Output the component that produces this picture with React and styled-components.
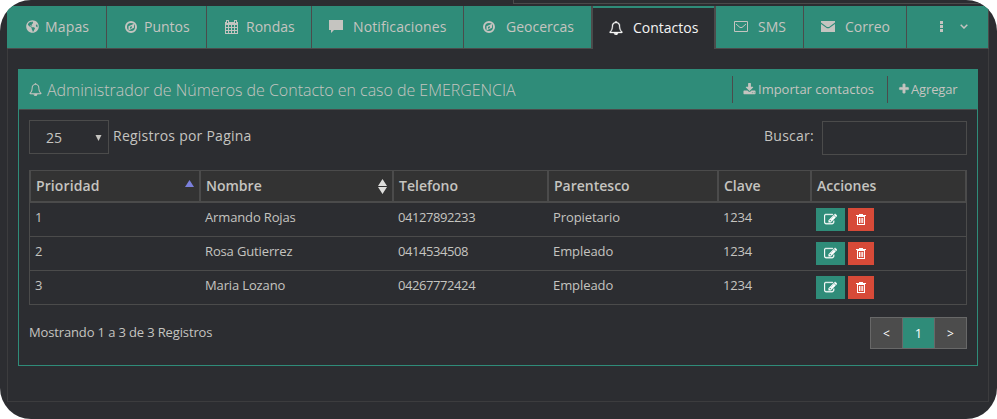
import React from 'react';
import styled, { createGlobalStyle } from 'styled-components';
import { FaGlobeAmericas } from 'react-icons/fa';

const teal = '#2f8c79';
const dark = '#2c2d31';
const line = '#4b4b4b';
const soft = '#c5c4c0';

const Global = createGlobalStyle`
  * { box-sizing: border-box; }
  body { margin: 0; background: #fff; font-family: "Open Sans", "Noto Sans", sans-serif; color: ${soft}; }
  button { font-family: inherit; }
`;

const Window = styled.div`
  width: 997px;
  height: 419px;
  border-radius: 31px;
  background: ${dark};
  overflow: hidden;
  display: flex;
  flex-direction: column;
`;

const TopStrip = styled.div`
  height: 6px;
  padding-left: 513px;
  flex: none;
`;

const TopField = styled.div`
  height: 4px;
  border-left: 1px solid ${line};
  border-bottom: 1px solid ${line};
`;

const Tabs = styled.nav`
  display: flex;
  width: 982px;
  height: 43px;
  margin-left: 7px;
  flex: none;
`;

const Tab = styled.button`
  display: flex;
  align-items: center;
  width: ${p => p.$w}px;
  height: 43px;
  flex: none;
  border: 0;
  border-right: 1px solid ${line};
  border-bottom: 1px solid ${line};
  background: ${teal};
  color: ${soft};
  padding: 0 0 1px ${p => p.$pad}px;
  font-size: 14px;
  line-height: 20px;
  text-align: left;
`;

const ActiveTab = styled(Tab)`
  border: 1px solid ${line};
  border-width: 0 2px 0 1px;
  background: linear-gradient(${teal} 2px, ${dark} 2px);
  color: #f4f4f4;
  padding-bottom: 0;
`;

const Text = styled.span`
  white-space: nowrap;
  letter-spacing: ${p => p.$ls || 0}px;
`;

const Glyph = styled.svg`
  display: block;
  flex: none;
  fill: currentColor;
  margin-right: ${p => p.$gap || 0}px;
`;

const GlobeBox = styled.span`
  display: flex;
  font-size: 13px;
  margin-right: 6px;
`;

const Content = styled.main`
  width: 982px;
  height: 353px;
  margin-left: 7px;
  padding: 20px 10px 0;
  border: 1px solid #3c3c3e;
  border-top: 0;
`;

const Panel = styled.section`
  width: 960px;
  height: 297px;
  border: 1px solid ${teal};
`;

const PanelHead = styled.header`
  display: flex;
  align-items: center;
  height: 40px;
  padding: 0 20px 0 10px;
  background: ${teal};
  border-bottom: 1px solid ${line};
`;

const Title = styled.h1`
  display: flex;
  align-items: center;
  margin: 0;
  flex: 1;
  font-size: 16px;
  line-height: 24px;
  font-weight: 300;
`;

const HeadAction = styled.button`
  display: flex;
  align-items: center;
  height: 27px;
  width: ${p => p.$w}px;
  padding: 0 0 1px 10px;
  border: 0;
  border-left: 1px solid ${line};
  background: none;
  color: ${soft};
  font-size: 13px;
  line-height: 20px;
`;

const Body = styled.div`
  padding: 10px 10px 0;
`;

const Filters = styled.div`
  display: flex;
  align-items: flex-start;
  height: 50px;
  font-size: 14px;
  line-height: 32px;
`;

const PageSize = styled.button`
  display: flex;
  align-items: center;
  justify-content: space-between;
  width: 80px;
  height: 34px;
  margin-right: 4px;
  padding: 1px 6px 0 16px;
  border: 1px solid ${line};
  background: none;
  color: ${soft};
  font-size: 14px;
`;

const Search = styled.label`
  display: flex;
  margin-left: auto;
`;

const SearchInput = styled.input`
  width: 145px;
  height: 34px;
  margin: 1px 0 0 8px;
  border: 1px solid ${line};
  background: none;
  color: ${soft};
`;

const Table = styled.div`
  width: 938px;
  border: 1px solid ${line};
  border-bottom: 0;
`;

const Row = styled.div`
  display: grid;
  grid-template-columns: 170px 193px 155px 170px 93px 155px;
  height: 34px;
  border-bottom: 1px solid ${line};
  font-size: 13px;
  line-height: 18px;
`;

const HeadRow = styled(Row)`
  height: 32px;
  border-bottom: 2px solid ${line};
  background: #333;
  font-size: 14px;
  font-weight: 600;
`;

const HeadCell = styled.div`
  display: flex;
  align-items: center;
  justify-content: space-between;
  padding: 0 5px;
  border: 1px solid ${line};
  border-width: 0 1px;
`;

const Cell = styled.div`
  padding: 5px 5px 0;
`;

const Actions = styled.div`
  display: flex;
  gap: 3px;
  padding: 5px 5px 0;
`;

const IconButton = styled.button`
  display: flex;
  align-items: center;
  justify-content: center;
  width: ${p => (p.$danger ? 26 : 29)}px;
  height: 23px;
  padding: 0;
  border: 0;
  background: ${p => (p.$danger ? '#d74a38' : teal)};
  color: #fff;
`;

const Foot = styled.footer`
  display: flex;
  justify-content: space-between;
  padding-top: 12px;
  font-size: 13px;
  line-height: 31px;
`;

const Pager = styled.div`
  display: flex;
  width: 97px;
  height: 32px;
  border: 1px solid #686868;
`;

const PageButton = styled.button`
  flex: 1;
  padding: 0;
  border: 0;
  background: ${p => (p.$on ? teal : '#4c4c4c')};
  color: #fff;
  font-size: ${p => (p.$on ? 13 : 12)}px;
  & + & { border-left: 1px solid #686868; }
`;

const paths = {
  bell: 'M912 1696q0-16-16-16-59 0-101.5-42.5t-42.5-101.5q0-16-16-16t-16 16q0 73 51.5 124.5t124.5 51.5q16 0 16-16zm-666-288h1300q-266-300-266-832 0-51-24-105t-69-103-121.5-80.5-169.5-31.5-169.5 31.5-121.5 80.5-69 103-24 105q0 532-266 832zm1482 0q0 52-38 90t-90 38h-448q0 106-75 181t-181 75-181-75-75-181h-448q-52 0-90-38t-38-90q50-42 91-88t85-119.5 74.5-158.5 50-206 19.5-260q0-152 117-282.5t307-158.5q-8-19-8-39 0-40 28-68t68-28 68 28 28 68q0 20-8 39 190 28 307 158.5t117 282.5q0 139 19.5 260t50 206 74.5 158.5 85 119.5 91 88z',
  download: 'M1344 1344q0-26-19-45t-45-19-45 19-19 45 19 45 45 19 45-19 19-45zm256 0q0-26-19-45t-45-19-45 19-19 45 19 45 45 19 45-19 19-45zm128-224v320q0 40-28 68t-68 28h-1472q-40 0-68-28t-28-68v-320q0-40 28-68t68-28h465l135 136q58 56 136 56t136-56l136-136h464q40 0 68 28t28 68zm-325-569q17 41-14 70l-448 448q-18 19-45 19t-45-19l-448-448q-31-29-14-70 17-39 59-39h256v-448q0-26 19-45t45-19h256q26 0 45 19t19 45v448h256q42 0 59 39z',
  plus: 'M1600 736v192q0 40-28 68t-68 28h-416v416q0 40-28 68t-68 28h-192q-40 0-68-28t-28-68v-416h-416q-40 0-68-28t-28-68v-192q0-40 28-68t68-28h416v-416q0-40 28-68t68-28h192q40 0 68 28t28 68v416h416q40 0 68 28t28 68z',
  edit: 'M888 1184l116-116-152-152-116 116v56h96v96h56zm440-720q-16-16-33 1l-350 350q-17 17-1 33t33-1l350-350q17-17 1-33zm80 594v190q0 119-84.5 203.5t-203.5 84.5h-832q-119 0-203.5-84.5t-84.5-203.5v-832q0-119 84.5-203.5t203.5-84.5h832q63 0 117 25 15 7 18 23 3 17-9 29l-49 49q-14 14-32 8-23-6-45-6h-832q-66 0-113 47t-47 113v832q0 66 47 113t113 47h832q66 0 113-47t47-113v-126q0-13 9-22l64-64q15-15 35-7t20 29zm-96-738l288 288-672 672h-288v-288zm444 132l-92 92-288-288 92-92q28-28 68-28t68 28l152 152q28 28 28 68t-28 68z',
};

const FontGlyph = ({ name, size, gap, bold = 0 }) => (
  <Glyph $gap={gap} width={size} height={size} viewBox="0 0 1792 1792">
    <path d={paths[name]} stroke="currentColor" strokeWidth={bold} />
  </Glyph>
);

const Compass = ({ gap }) => (
  <Glyph $gap={gap} width="12" height="12" viewBox="0 0 12 12">
    <circle cx="6" cy="6" r="5" fill="none" stroke="currentColor" strokeWidth="2" />
    <path fillRule="evenodd" d="M9 2.800v4L3.500 9.500V5.300zM5 6v1.800L6.800 6.900V5.100z" />
  </Glyph>
);

const Calendar = () => (
  <Glyph $gap={8} width="13" height="14" viewBox="0 0 13 14">
    <path fillRule="evenodd" d="M0 2h1V0h3v2h5V0h3v2h1v12H0zM2 1v2h1V1zM10 1v2h1V1zM1 5v2h2V5zM4 5v2h2V5zM7 5v2h2V5zM10 5v2h2V5zM1 8v2h2V8zM4 8v2h2V8zM7 8v2h2V8zM10 8v2h2V8zM1 11v2h2v-2zM4 11v2h2v-2zM7 11v2h2v-2zM10 11v2h2v-2z" />
  </Glyph>
);

const Bubble = () => (
  <Glyph $gap={10} width="14" height="13" viewBox="0 0 14 13">
    <path d="M0 0h14v10H5l-3 3v-3H0z" />
  </Glyph>
);

const Envelope = ({ filled }) => (
  <Glyph $gap={10} width="14" height="11" viewBox="0 0 14 11">
    {filled ? (
      <path d="M0 0h14v1.500L8 6H6L0 1.500zM0 3l6 4.200h2L14 3v8H0z" />
    ) : (
      <path fill="none" stroke="currentColor" d="M.5.5h13v10H.5zM2 3l4 3.500h2L12 3" />
    )}
  </Glyph>
);

const Trash = () => (
  <Glyph width="10" height="11" viewBox="0 0 10 11">
    <path fillRule="evenodd" d="M3 0h4v1h3v1H9v9H1V2H0V1h3zM2 3v7h6V3zM3 4h1v5H3zM4.600 4h1v5h-1zM6.200 4h1v5h-1z" />
  </Glyph>
);

const tracking = [0, -0.14, -0.42, -0.08, -0.2];

const rows = [
  ['1', 'Armando Rojas', '04127892233', 'Propietario', '1234'],
  ['2', 'Rosa Gutierrez', '0414534508', 'Empleado', '1234'],
  ['3', 'Maria Lozano', '04267772424', 'Empleado', '1234'],
];

export default function App() {
  return (
    <>
      <Global />
      <Window>
        <TopStrip><TopField /></TopStrip>
        <Tabs>
          <Tab $w={100} $pad={19}><GlobeBox><FaGlobeAmericas /></GlobeBox><Text $ls={0.15}>Mapas</Text></Tab>
          <Tab $w={100} $pad={18}><Compass gap={7} /><Text>Puntos</Text></Tab>
          <Tab $w={105} $pad={18}><Calendar /><Text>Rondas</Text></Tab>
          <Tab $w={152} $pad={17}><Bubble /><Text $ls={0.1}>Notificaciones</Text></Tab>
          <Tab $w={128} $pad={19}><Compass gap={11} /><Text>Geocercas</Text></Tab>
          <ActiveTab $w={124} $pad={16}><FontGlyph name="bell" size={14} gap={10} bold={40} /><Text>Contactos</Text></ActiveTab>
          <Tab $w={88} $pad={18}><Envelope /><Text>SMS</Text></Tab>
          <Tab $w={103} $pad={17}><Envelope filled /><Text>Correo</Text></Tab>
          <Tab $w={82} $pad={33}>
            <Glyph $gap={17} width="3" height="11" viewBox="0 0 3 11"><path d="M0 0h3v3H0zM0 4h3v3H0zM0 8h3v3H0z" /></Glyph>
            <Glyph width="8" height="5" viewBox="0 0 8 5"><path d="M.7.7L4 4 7.300.7" fill="none" stroke="currentColor" strokeWidth="1.500" /></Glyph>
          </Tab>
        </Tabs>
        <Content>
          <Panel>
            <PanelHead>
              <Title><FontGlyph name="bell" size={13} gap={5} bold={20} /><Text $ls={-0.03}>Administrador de Números de Contacto en caso de EMERGENCIA</Text></Title>
              <HeadAction $w={155}><FontGlyph name="download" size={13} gap={2} /><Text>Importar contactos</Text></HeadAction>
              <HeadAction $w={70}><FontGlyph name="plus" size={12} gap={1} bold={50} /><Text $ls={-0.15}>Agregar</Text></HeadAction>
            </PanelHead>
            <Body>
              <Filters>
                <PageSize><Text>25</Text><Glyph width="7" height="6" viewBox="0 0 7 6"><path d="M.5 0h6L3.500 6z" /></Glyph></PageSize>
                <Text $ls={0.24}>Registros por Pagina</Text>
                <Search><Text $ls={0.25}>Buscar:</Text><SearchInput /></Search>
              </Filters>
              <Table>
                <HeadRow>
                  <HeadCell><Text $ls={0.1}>Prioridad</Text><Glyph width="9" height="12" viewBox="0 0 9 12"><path d="M4.500 0L9 7H0z" fill="#7b80dc" /></Glyph></HeadCell>
                  <HeadCell><Text>Nombre</Text><Glyph width="9" height="15" viewBox="0 0 9 15"><path d="M4.500 0L9 7H0zM0 8h9l-4.500 7z" fill="#dededc" /></Glyph></HeadCell>
                  <HeadCell><Text>Telefono</Text></HeadCell>
                  <HeadCell><Text>Parentesco</Text></HeadCell>
                  <HeadCell><Text>Clave</Text></HeadCell>
                  <HeadCell><Text>Acciones</Text></HeadCell>
                </HeadRow>
                {rows.map(r => (
                  <Row key={r[0]}>
                    {r.map((c, i) => <Cell key={i}><Text $ls={tracking[i]}>{c}</Text></Cell>)}
                    <Actions>
                      <IconButton aria-label="Editar"><FontGlyph name="edit" size={13} bold={50} /></IconButton>
                      <IconButton $danger aria-label="Eliminar"><Trash /></IconButton>
                    </Actions>
                  </Row>
                ))}
              </Table>
              <Foot>
                <Text $ls={-0.14}>Mostrando 1 a 3 de 3 Registros</Text>
                <Pager>
                  <PageButton>&lt;</PageButton>
                  <PageButton $on>1</PageButton>
                  <PageButton>&gt;</PageButton>
                </Pager>
              </Foot>
            </Body>
          </Panel>
        </Content>
      </Window>
    </>
  );
}
